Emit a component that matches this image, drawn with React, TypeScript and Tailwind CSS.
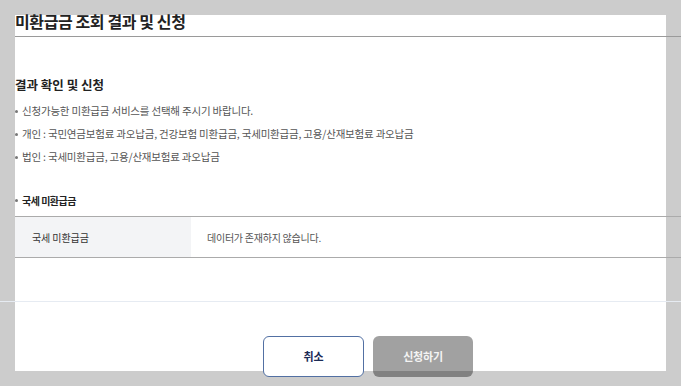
import React from 'react';

const guideItems = [
  '신청가능한 미환급금 서비스를 선택해 주시기 바랍니다.',
  '개인 : 국민연금보험료 과오납금, 건강보험 미환급금, 국세미환급금, 고용/산재보험료 과오납금',
  '법인 : 국세미환급금, 고용/산재보험료 과오납금',
];

const Dot = () => <span className="inline-block w-[3px] h-[3px] rounded-full bg-[#777] shrink-0" />;

export default function App() {
  return (
    <div className="w-[681px] h-[386px] overflow-hidden bg-[#cccccc] pt-[15px] px-[15px] font-['Noto_Sans_CJK_KR','Noto_Sans',sans-serif]">
      <div className="h-[356px] bg-white flex flex-col">
        {/* Title */}
        <div className="shrink-0 -mt-[5px] -mr-[15px] h-[27px] border-b border-[#9a9a9a]">
          <h1 className="text-[16px] leading-[22px] font-bold tracking-[-0.4px] text-[#222]">
            미환급금 조회 결과 및 신청
          </h1>
        </div>

        {/* Guide */}
        <h2 className="shrink-0 mt-[39px] text-[12.5px] leading-[18px] font-bold text-[#222]">
          결과 확인 및 신청
        </h2>
        <ul className="shrink-0 mt-[6px] flex flex-col gap-[1px]">
          {guideItems.map((t) => (
            <li key={t} className="flex items-center gap-[4px] h-[22px]">
              <Dot />
              <span className="text-[10.5px] tracking-[-0.2px] text-[#555]">{t}</span>
            </li>
          ))}
        </ul>

        {/* Result */}
        <div className="shrink-0 mt-[23px] flex items-center gap-[4px] h-[18px]">
          <Dot />
          <span className="text-[10px] font-bold tracking-[-0.5px] text-[#222]">국세 미환급금</span>
        </div>
        <div className="shrink-0 mt-[7px] -mr-[15px] flex h-[42px] border-y border-[#ababab]">
          <div className="w-[176px] bg-[#f3f4f6] flex items-center pl-[17px] text-[10px] tracking-[-0.1px] text-[#333]">
            국세 미환급금
          </div>
          <div className="flex items-center pl-[16px] text-[10px] tracking-[-0.25px] text-[#555]">
            데이터가 존재하지 않습니다.
          </div>
        </div>

        <div className="shrink-0 mt-[43px] -mx-[15px] h-px bg-[#e6ebf2]" />

        {/* Buttons */}
        <div className="shrink-0 mt-[34px] pl-[248px] flex gap-[9px]">
          <button className="w-[101px] h-[41px] rounded-[6px] border border-[#5270a3] bg-white text-[11px] font-bold text-[#1c2b55]">
            취소
          </button>
          <button className="w-[100px] h-[41px] rounded-[6px] bg-black/[0.37] text-[11px] font-bold tracking-[-0.2px] text-[#f4f4f4]">
            신청하기
          </button>
        </div>
      </div>
    </div>
  );
}
